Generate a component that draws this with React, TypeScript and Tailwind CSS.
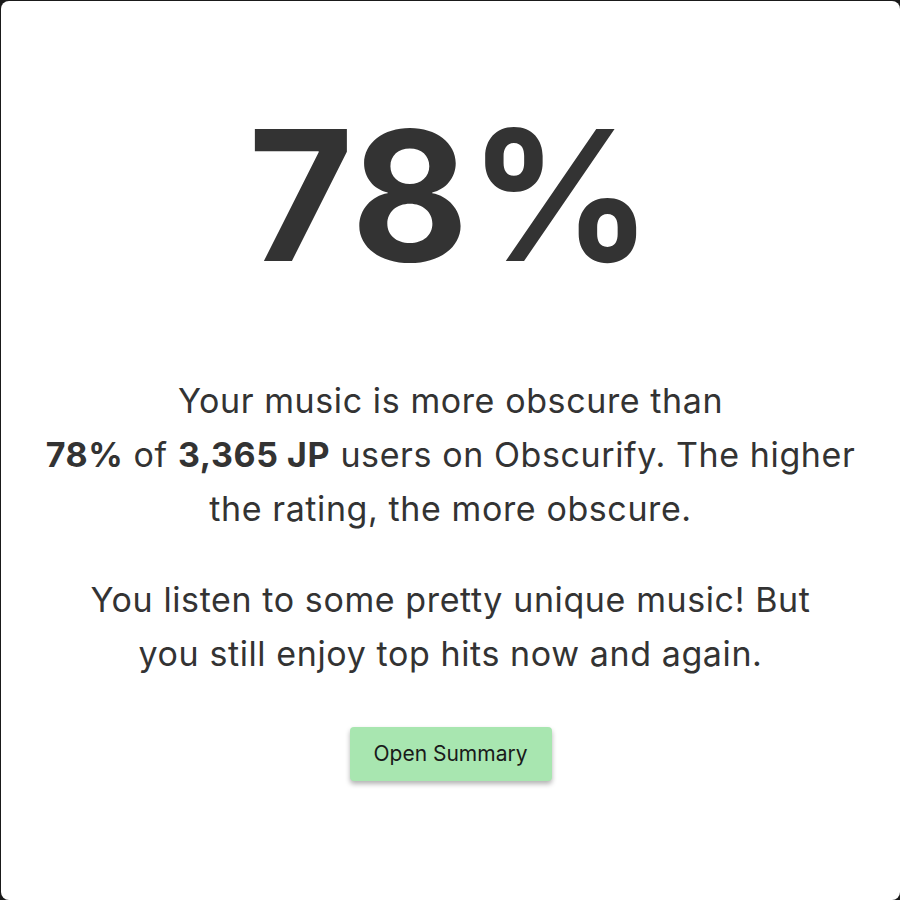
export default function App() {
  return (
    <div className="w-[900px] h-[900px] bg-[#1a1a1a] pt-px pl-px">
      <div
        className="w-[899px] h-[899px] bg-white rounded-[8px] flex flex-col items-center text-[#333333]"
        style={{ fontFamily: 'Inter, "Noto Sans", sans-serif' }}
      >
        <div className="mt-[85px] text-[181px] leading-[220px] font-bold tracking-[0px]">78%</div>
        <div className="mt-[68px] w-[860px] text-center text-[34px] leading-[54px] tracking-[0.6px]">
          <p>
            Your music is more obscure than
            <br />
            <b className="font-bold">78%</b> of <b className="font-bold">3,365 JP</b> users on Obscurify. The higher
            <br />
            the rating, the more obscure.
          </p>
          <p className="mt-[37px]">
            You listen to some pretty unique music! But
            <br />
            you still enjoy top hits now and again.
          </p>
        </div>
        <button className="mt-[46px] w-[202px] h-[54px] rounded-[4px] bg-[#a8e6b0] text-[21px] text-[#1a1a1a] shadow-[0_3px_5px_rgba(0,0,0,0.3)]">
          Open Summary
        </button>
      </div>
    </div>
  );
}
